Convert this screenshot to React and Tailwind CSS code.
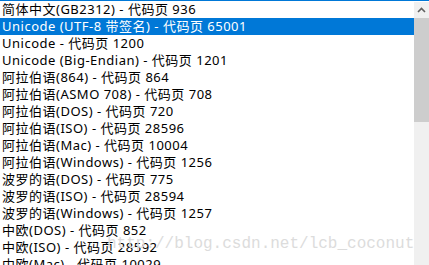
import React from 'react';

const items = [
    '简体中文(GB2312) - 代码页 936',
    'Unicode (UTF-8 带签名) - 代码页 65001',
    'Unicode - 代码页 1200',
    'Unicode (Big-Endian) - 代码页 1201',
    '阿拉伯语(864) - 代码页 864',
    '阿拉伯语(ASMO 708) - 代码页 708',
    '阿拉伯语(DOS) - 代码页 720',
    '阿拉伯语(ISO) - 代码页 28596',
    '阿拉伯语(Mac) - 代码页 10004',
    '阿拉伯语(Windows) - 代码页 1256',
    '波罗的语(DOS) - 代码页 775',
    '波罗的语(ISO) - 代码页 28594',
    '波罗的语(Windows) - 代码页 1257',
    '中欧(DOS) - 代码页 852',
    '中欧(ISO) - 代码页 28592',
    '中欧(Mac) - 代码页 10029',
];

const App = () => {
    return (
        <div className="relative w-[429px] h-[265px] overflow-hidden bg-white border-t border-[#0078d7] flex">
            <ul className="flex-1 font-['Noto_Sans','Noto_Sans_CJK_SC',sans-serif] text-[13px] tracking-[0.5px] text-black">
                {items.map((item, i) => (
                    <li
                        key={i}
                        className={
                            i === 1
                                ? 'h-[17px] leading-[17px] pl-[2px] bg-[#0078d7] text-white whitespace-nowrap'
                                : 'h-[17px] leading-[17px] pl-[2px] whitespace-nowrap'
                        }
                    >
                        {item}
                    </li>
                ))}
            </ul>
            <div className="w-[15px] mt-[1px] bg-[#f0f0f0] flex flex-col">
                <div className="h-[16px] flex items-center justify-center">
                    <svg width="9" height="6" viewBox="0 0 9 6">
                        <path d="M1 5 L4.5 1.5 L8 5" stroke="#606060" strokeWidth="1.6" fill="none" />
                    </svg>
                </div>
                <div className="h-[104px] bg-[#cdcdcd]" />
            </div>
            <div className="absolute left-[107px] top-[235px] leading-none font-['Liberation_Mono',monospace] text-[16px] text-[#dcdcdc] whitespace-nowrap pointer-events-none">
                http://blog.csdn.net/lcb_coconut
            </div>
        </div>
    );
};

export default App;
